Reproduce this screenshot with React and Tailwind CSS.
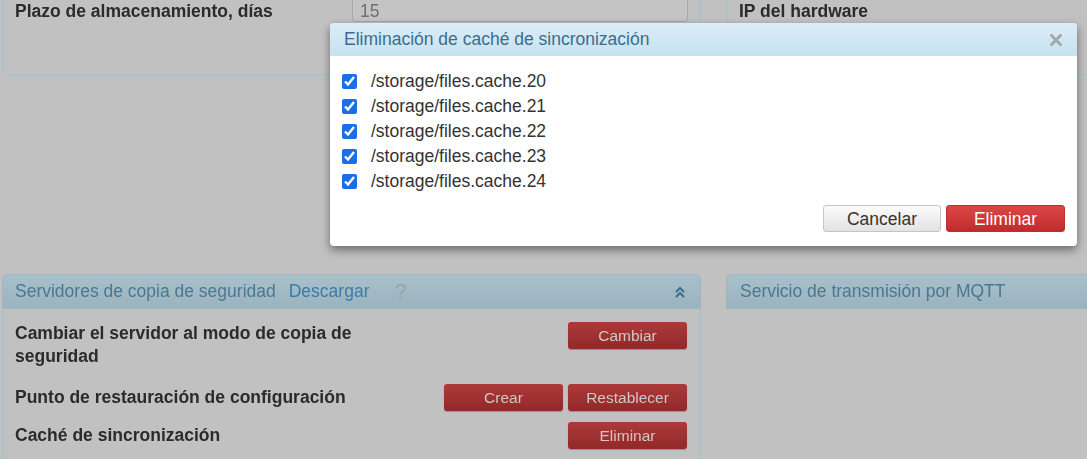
import React from 'react'

const files = [
    '/storage/files.cache.20',
    '/storage/files.cache.21',
    '/storage/files.cache.22',
    '/storage/files.cache.23',
    '/storage/files.cache.24',
]

function DimButton({ children, className = '' }) {
    return (
        <button className={`h-[27px] w-[119px] rounded-[3px] bg-gradient-to-b from-[#ad3a3a] to-[#922828] text-[15.5px] text-[#d3c6c6] shadow-[0_1px_1px_rgba(0,0,0,0.25)] ${className}`}>
            {children}
        </button>
    )
}

function BackgroundPage() {
    return (
        <div className="blur-[0.6px] pl-[2px] -mt-[40px] w-[1200px]">
            {/* top panels */}
            <div className="flex gap-[25px]">
                <div className="w-[699px] h-[116px] shrink-0 rounded-[5px] border-2 border-[#abc3cc] px-[11px] pt-[32px]">
                    <div className="flex justify-between items-start">
                        <div className="mt-[7px] text-[17.5px] leading-[20px] font-bold text-[#2b2b2b]">Plazo de almacenamiento, días</div>
                        <div className="w-[336px] h-[28px] rounded-[3px] border border-[#a8a8a8] bg-[#c4c4c4] pl-[7px] pt-[7px] text-[17.5px] leading-[18px] text-[#6f6f6f]">15</div>
                    </div>
                </div>
                <div className="w-[420px] h-[116px] shrink-0 rounded-[5px] border-2 border-[#abc3cc] px-[11px] pt-[32px]">
                    <div className="mt-[7px] text-[17.5px] leading-[20px] font-bold text-[#2b2b2b]">IP del hardware</div>
                </div>
            </div>

            {/* bottom panels */}
            <div className="flex gap-[25px] mt-[198px]">
                <div className="w-[699px] shrink-0">
                    <div className="h-[35px] rounded-t-[5px] border border-[#9fb7c1] bg-gradient-to-b from-[#a8c0ca] to-[#9bb3be] flex items-center pl-[12px] pr-[14px]">
                        <span className="text-[17.5px] text-[#4a7891]">Servidores de copia de seguridad</span>
                        <span className="ml-[13px] text-[17.5px] text-[#3b7bab]">Descargar</span>
                        <span className="ml-[25px] text-[22px] leading-none text-[#9aa3a7]">?</span>
                        <svg className="ml-auto" width="12" height="12" viewBox="0 0 12 12" fill="none" stroke="#3f6c86" strokeWidth="2">
                            <path d="M2 6 L6 2 L10 6" />
                            <path d="M2 11 L6 7 L10 11" />
                        </svg>
                    </div>
                    <div className="h-[160px] border-x-2 border-[#abc3cc] pl-[11px] pr-[12px] pt-[13px]">
                        <div className="flex justify-between items-start">
                            <div className="w-[350px] text-[17.5px] leading-[23px] font-bold text-[#2b2b2b]">Cambiar el servidor al modo de copia de seguridad</div>
                            <DimButton>Cambiar</DimButton>
                        </div>
                        <div className="flex justify-between items-center mt-[16px]">
                            <div className="text-[17.5px] leading-[23px] font-bold text-[#2b2b2b]">Punto de restauración de configuración</div>
                            <div className="flex gap-[5px]">
                                <DimButton className="w-[118px]">Crear</DimButton>
                                <DimButton>Restablecer</DimButton>
                            </div>
                        </div>
                        <div className="flex justify-between items-center mt-[11px]">
                            <div className="text-[17.5px] leading-[23px] font-bold text-[#2b2b2b]">Caché de sincronización</div>
                            <DimButton>Eliminar</DimButton>
                        </div>
                    </div>
                </div>
                <div className="w-[420px] shrink-0">
                    <div className="h-[35px] rounded-t-[5px] border border-[#9fb7c1] bg-gradient-to-b from-[#a8c0ca] to-[#9bb3be] flex items-center pl-[13px]">
                        <span className="text-[17.5px] text-[#4a7891]">Servicio de transmisión por MQTT</span>
                    </div>
                </div>
            </div>
        </div>
    )
}

export default function App() {
    return (
        <div className="relative w-[1087px] h-[459px] overflow-hidden bg-[#c1c1c1] font-['Liberation_Sans',Arial,sans-serif]">
            <BackgroundPage />

            {/* modal dialog */}
            <div className="absolute left-[330px] top-[23px] w-[747px] h-[223px] rounded-[4px] bg-white overflow-hidden shadow-[0_4px_10px_rgba(0,0,0,0.45)]">
                <div className="h-[33px] bg-gradient-to-b from-[#dcedf7] to-[#c6e2f1] flex items-center justify-between pl-[14px] pr-[15px]">
                    <span className="text-[17.5px] text-[#3a6d8d]">Eliminación de caché de sincronización</span>
                    <svg width="12" height="12" viewBox="0 0 12 12" stroke="#a2a9ad" strokeWidth="3" strokeLinecap="square">
                        <path d="M1.5 1.5 L10.5 10.5" />
                        <path d="M10.5 1.5 L1.5 10.5" />
                    </svg>
                </div>
                <div className="pt-[13px] pl-[12px] pr-[12px]">
                    {files.map(f => (
                        <label key={f} className="flex items-center gap-[14px] h-[25px]">
                            <input type="checkbox" defaultChecked className="m-0 w-[15px] h-[15px] accent-[#1a6fe8]" />
                            <span className="text-[17.5px] text-[#333]">{f}</span>
                        </label>
                    ))}
                    <div className="flex justify-end gap-[5px] mt-[11px]">
                        <button className="w-[118px] h-[27px] rounded-[3px] border border-[#c5c5c5] bg-gradient-to-b from-[#fbfbfb] to-[#e3e3e3] text-[17.5px] text-[#333]">Cancelar</button>
                        <button className="w-[119px] h-[27px] rounded-[3px] border border-[#b93030] bg-gradient-to-b from-[#dc4646] to-[#c02b2b] text-[17.5px] text-white">Eliminar</button>
                    </div>
                </div>
            </div>
        </div>
    )
}
